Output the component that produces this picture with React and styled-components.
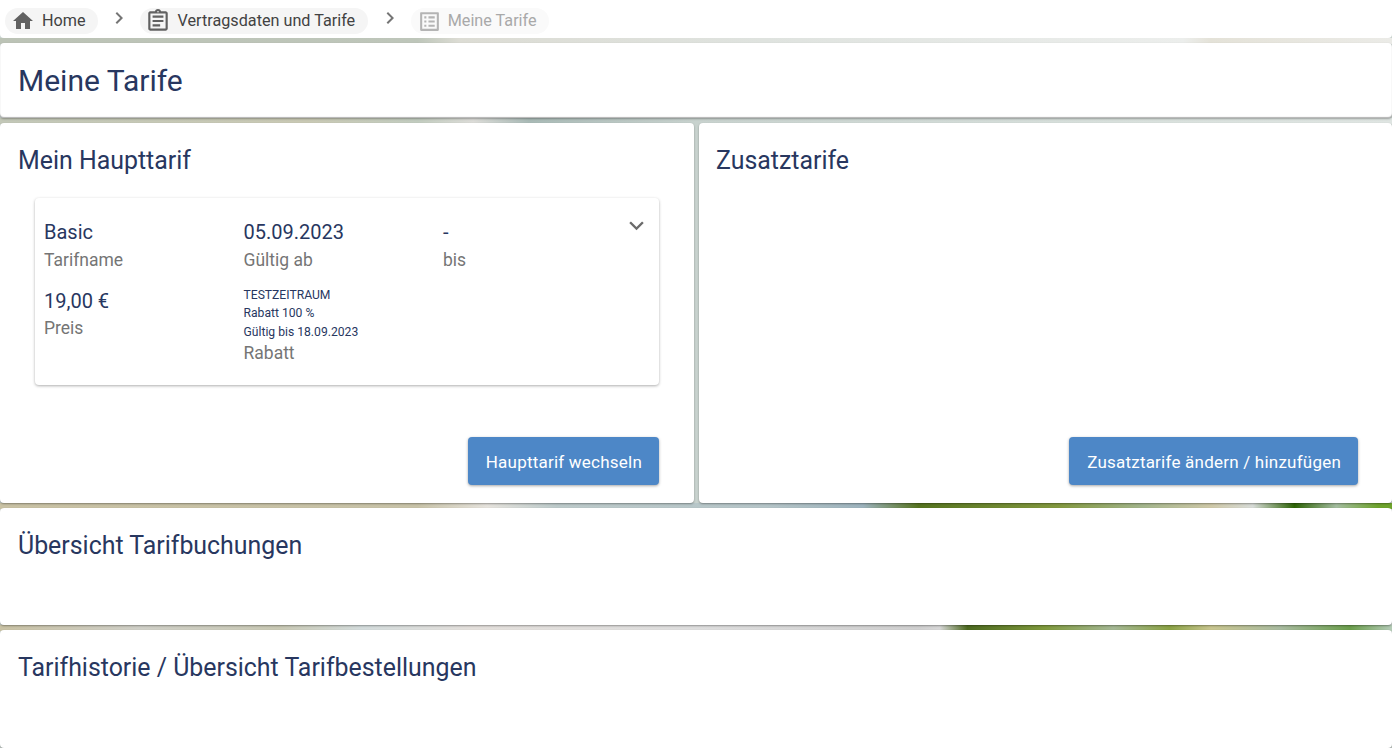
import React from "react";
import styled, { createGlobalStyle } from "styled-components";

const navy = "#28375f";
const grey = "#757575";

const GlobalStyle = createGlobalStyle`
  html, body {
    margin: 0;
    padding: 0;
    height: 100%;
    overflow: hidden;
    background: #fff;
  }
  body {
    font-family: Roboto, "Liberation Sans", sans-serif;
  }
`;

// the blurred photo behind the page only shows in the gaps between the cards
const strip1 = "linear-gradient(90deg, #bcc3b6 0, #bec6ba 30%, #dcdcd4 33%, #dfe3df 55%, #eceeec 85%, #e4e2d8 87%, #ebebe7 100%)";
const strip2 = "linear-gradient(90deg, #c3c8b8 0, #c9c9b4 22%, #c2ccbf 30%, #dcdcd8 34%, #a9bab6 38%, #c8d2ce 50%, #d8e0dc 80%, #dfe5e2 100%)";
const strip3 = "linear-gradient(90deg, #c9c2a4 0, #c8c3a8 30%, #e6e3dd 35%, #bccaca 40%, #b5c5c8 55%, #9db3bd 62%, #56741f 66%, #83993f 76%, #a3b58c 82%, #cfc9a8 87%, #d8dcd8 90%, #2d6405 93%, #a4bda0 96%, #6ea42c 99%)";
const strip4 = "linear-gradient(90deg, #c9c2a4 0, #d0d0c8 10%, #c9c9b4 20%, #d4dcdc 26%, #e4e0dc 34%, #dedede 50%, #d0d0d0 66%, #d8d8d8 67.5%, #4d6a20 69.5%, #7f9a3c 75%, #a5b895 80%, #8ba345 84%, #c9c690 87%, #a9bba0 92%, #6b9f4c 97%, #b5ccb8 100%)";

const Page = styled.div`
  display: flex;
  flex-direction: column;
  gap: 5px;
  height: 748px;
  overflow: hidden;
  background-color: #c8d2ce;
  background-image: ${strip1}, ${strip2}, ${strip3}, ${strip4};
  background-repeat: no-repeat;
  background-size: 100% 6px;
  background-position: 0 38px, 0 118px, 0 503px, 0 625px;
`;

const Breadcrumbs = styled.nav`
  height: 38px;
  box-sizing: border-box;
  display: flex;
  align-items: flex-start;
  padding: 8px 0 0 5px;
  background: #fff;
  border-radius: 0 0 4px 4px;
`;

const Crumb = styled.div`
  display: flex;
  align-items: center;
  gap: ${(p) => p.$gap}px;
  height: 26px;
  box-sizing: border-box;
  padding: ${(p) => p.$padding};
  border-radius: 13px;
  background: ${(p) => (p.$disabled ? "#fafafa" : "#f5f5f5")};
  font-size: 16.2px;
  line-height: 24px;
  color: ${(p) => (p.$disabled ? "#a9a9a9" : "#424242")};
  white-space: nowrap;
  span {
    margin-top: -1px;
  }
  svg {
    fill: ${(p) => (p.$disabled ? "#b4b4b4" : "#616161")};
    flex: none;
  }
`;

const Separator = styled.svg`
  width: 24px;
  height: 24px;
  margin: -2px 9px 0 9.5px;
  fill: #757575;
  flex: none;
`;

const Paper = styled.section`
  background: #fff;
  border-radius: 4px;
  box-shadow: 0 1px 2px rgba(0, 0, 0, 0.35);
  box-sizing: border-box;
`;

const TitleCard = styled(Paper)`
  height: 75px;
  padding: 0 18px;
  display: flex;
  align-items: center;
  box-shadow: inset 0 -1px 1px rgba(0, 0, 0, 0.3), 0 1px 2px rgba(0, 0, 0, 0.3);
`;

const PageTitle = styled.h1`
  margin: 0 0 1px;
  font-size: 30px;
  font-weight: 400;
  color: ${navy};
`;

const Columns = styled.div`
  display: grid;
  grid-template-columns: 694px 693px;
  gap: 5px;
  height: 380px;
`;

const TariffPanel = styled(Paper)`
  position: relative;
  padding: 23px ${(p) => p.$inset}px 18px;
  display: flex;
  flex-direction: column;
`;

const SectionTitle = styled.h2`
  margin: 0;
  font-size: 24.9px;
  line-height: 30px;
  font-weight: 400;
  color: ${navy};
`;

const TariffCard = styled.article`
  position: relative;
  margin: 22px 17px 0;
  height: 187px;
  box-sizing: border-box;
  padding: 21px 9px 0;
  border-radius: 4px;
  box-shadow: 0 1px 3px rgba(0, 0, 0, 0.32);
  display: grid;
  grid-template-columns: 199.5px 199.5px 1fr;
  grid-template-rows: 56px auto;
  row-gap: 13px;
`;

const Field = styled.div`
  display: flex;
  flex-direction: column;
`;

const Value = styled.div`
  font-size: 20px;
  line-height: 26px;
  color: ${navy};
`;

const Label = styled.div`
  font-size: 17.5px;
  line-height: 24px;
  margin-top: ${(p) => p.$offset ?? 3}px;
  color: ${grey};
`;

const SmallLines = styled.div`
  margin-top: -2px;
`;

const SmallLine = styled.div`
  font-size: 12.15px;
  line-height: 18.4px;
  color: ${navy};
`;

const Expand = styled.svg`
  position: absolute;
  top: 13px;
  right: 8.5px;
  width: 29px;
  height: 29px;
  fill: #6b6b6b;
`;

const Actions = styled.div`
  margin-top: auto;
  display: flex;
  justify-content: flex-end;
  padding-right: ${(p) => p.$right}px;
`;

const Button = styled.button`
  height: 48px;
  padding: 1px 17px 0 18px;
  border: 0;
  border-radius: 4px;
  background: #4d87c7;
  color: #fff;
  font-family: inherit;
  font-size: 17px;
  letter-spacing: 0.22px;
  box-shadow: 0 1px 3px rgba(0, 0, 0, 0.35);
`;

const WideCard = styled(Paper)`
  height: ${(p) => p.$height}px;
  padding: 23.4px 18px 0;
  flex: ${(p) => (p.$fill ? "1" : "none")};
`;

const Icon = ({ d, size }) => (
  <svg width={size} height={size} viewBox="0 0 24 24">
    <path d={d} />
  </svg>
);

const ChevronRight = () => (
  <Separator viewBox="0 0 24 24">
    <path d="M10 6 8.59 7.41 13.17 12l-4.58 4.59L10 18l6-6z" />
  </Separator>
);

const homeIcon = "M10 20v-6h4v6h5v-8h3L12 3 2 12h3v8z";
const assignmentIcon =
  "M7 15h7v2H7zm0-4h10v2H7zm0-4h10v2H7zm12-4h-4.18C14.4 1.84 13.3 1 12 1c-1.3 0-2.4.84-2.82 2H5c-.14 0-.27.01-.4.04-.39.08-.74.28-1.01.55-.18.18-.33.4-.43.64-.1.23-.16.49-.16.77v14c0 .27.06.54.16.78s.25.45.43.64c.27.27.62.47 1.01.55.13.02.26.03.4.03h14c1.1 0 2-.9 2-2V5c0-1.1-.9-2-2-2zm-7-.25c.41 0 .75.34.75.75s-.34.75-.75.75-.75-.34-.75-.75.34-.75.75-.75zM19 19H5V5h14v14z";
const listIcon =
  "M19 5v14H5V5h14m1.1-2H3.9c-.5 0-.9.4-.9.9v16.2c0 .4.4.9.9.9h16.2c.4 0 .9-.5.9-.9V3.9c0-.5-.5-.9-.9-.9zM11 7h6v2h-6V7zm0 4h6v2h-6v-2zm0 4h6v2h-6zM7 7h2v2H7zm0 4h2v2H7zm0 4h2v2H7z";

export default function App() {
  return (
    <>
      <GlobalStyle />
      <Page>
        <Breadcrumbs>
          <Crumb $gap={7} $padding="0 12px 0 6px">
            <Icon d={homeIcon} size={24} />
            <span>Home</span>
          </Crumb>
          <ChevronRight />
          <Crumb $gap={7} $padding="0 13px 0 4.5px">
            <Icon d={assignmentIcon} size={26} />
            <span>Vertragsdaten und Tarife</span>
          </Crumb>
          <ChevronRight />
          <Crumb $disabled $gap={6} $padding="0 12px 0 6px">
            <Icon d={listIcon} size={25} />
            <span>Meine Tarife</span>
          </Crumb>
        </Breadcrumbs>

        <TitleCard>
          <PageTitle>Meine Tarife</PageTitle>
        </TitleCard>

        <Columns>
          <TariffPanel $inset={18}>
            <SectionTitle>Mein Haupttarif</SectionTitle>
            <TariffCard>
              <Field>
                <Value>Basic</Value>
                <Label>Tarifname</Label>
              </Field>
              <Field>
                <Value>05.09.2023</Value>
                <Label>Gültig ab</Label>
              </Field>
              <Field>
                <Value>-</Value>
                <Label>bis</Label>
              </Field>
              <Field>
                <Value>19,00 €</Value>
                <Label $offset={2}>Preis</Label>
              </Field>
              <Field>
                <SmallLines>
                  <SmallLine>TESTZEITRAUM</SmallLine>
                  <SmallLine>Rabatt 100 %</SmallLine>
                  <SmallLine>Gültig bis 18.09.2023</SmallLine>
                </SmallLines>
                <Label $offset={0}>Rabatt</Label>
              </Field>
              <Expand viewBox="0 0 24 24">
                <path d="M16.59 8.59 12 13.17 7.41 8.59 6 10l6 6 6-6z" />
              </Expand>
            </TariffCard>
            <Actions $right={17}>
              <Button>Haupttarif wechseln</Button>
            </Actions>
          </TariffPanel>

          <TariffPanel $inset={17}>
            <SectionTitle>Zusatztarife</SectionTitle>
            <Actions $right={17}>
              <Button>Zusatztarife ändern / hinzufügen</Button>
            </Actions>
          </TariffPanel>
        </Columns>

        <WideCard $height={117}>
          <SectionTitle>Übersicht Tarifbuchungen</SectionTitle>
        </WideCard>

        <WideCard $fill>
          <SectionTitle>Tarifhistorie / Übersicht Tarifbestellungen</SectionTitle>
        </WideCard>
      </Page>
    </>
  );
}
